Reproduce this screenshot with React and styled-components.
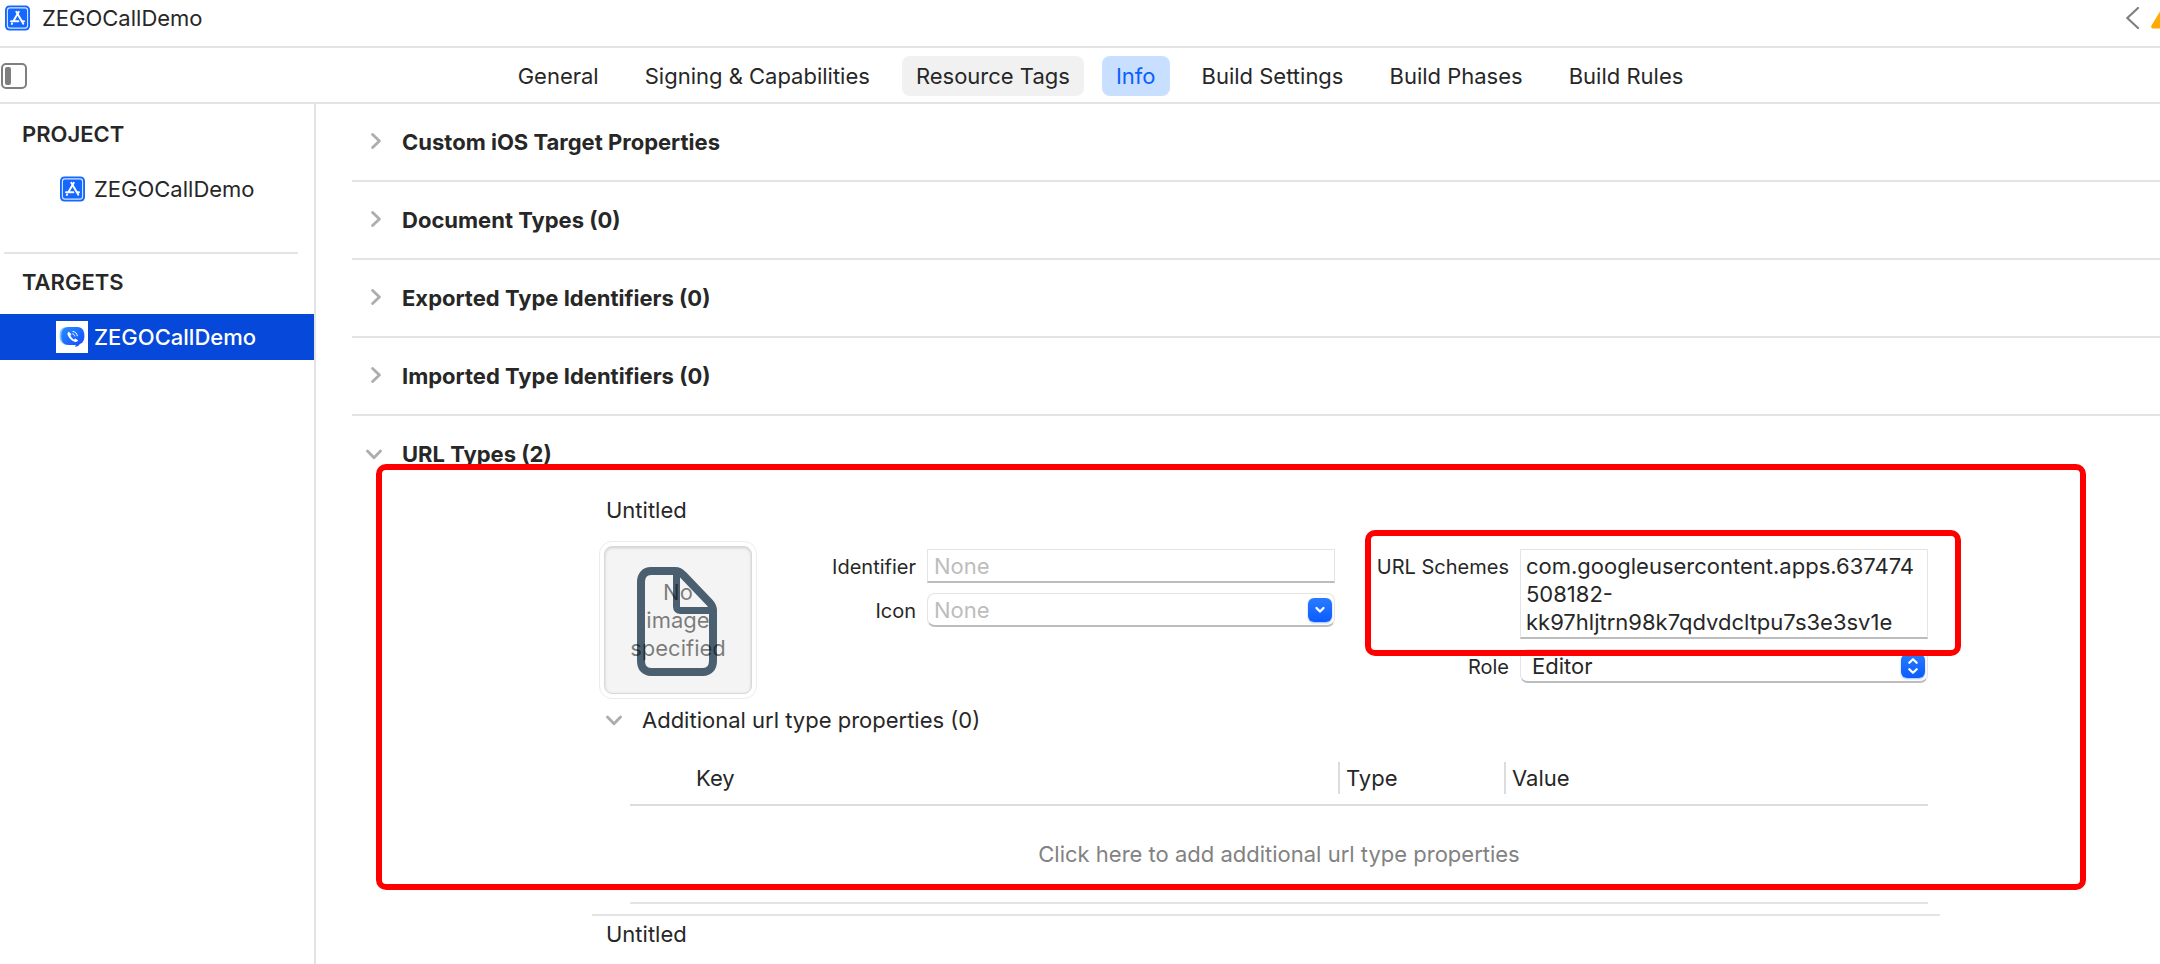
import React from 'react';
import styled, { createGlobalStyle, css } from 'styled-components';

const ink = '#272727';
const rule = '#e4e4e4';
const blue = '#0a60ff';

const GlobalStyle = createGlobalStyle`
  *, *::before, *::after { box-sizing: border-box; }
  body {
    margin: 0;
    background: #fff;
    color: ${ink};
    font: 400 22px/28px Inter, "Liberation Sans", sans-serif;
    overflow-x: hidden;
  }
  h1, h2, h3, p, ul { margin: 0; padding: 0; font: inherit; list-style: none; }
  button, input, select, textarea { font: inherit; color: inherit; margin: 0; }
  svg { display: block; flex: none; }
`;

const Window = styled.div`
  display: flex;
  flex-direction: column;
  height: 100vh;
  overflow: hidden;
`;

const TitleBar = styled.header`
  display: flex;
  align-items: center;
  flex: none;
  height: 48px;
  padding: 0 0 10px 5px;
  border-bottom: 2px solid ${rule};
`;

const Title = styled.h1`
  flex: 1;
  margin-left: 12px;
`;

const BareButton = styled.button`
  padding: 0;
  border: 0;
  background: none;
  cursor: pointer;
`;

const WarningSlot = styled.span`
  width: 9px;
  margin-left: 12px;
  overflow: hidden;
`;

const TabBar = styled.div`
  display: flex;
  align-items: center;
  flex: none;
  height: 56px;
  padding: 2px 0 0 1px;
  border-bottom: 2px solid ${rule};
`;

const Tabs = styled.nav`
  display: flex;
  flex: 1;
  justify-content: center;
  gap: 18px;
  margin-left: 14px;
`;

const Tab = styled.button`
  height: 40px;
  padding: 0 14px;
  border: 0;
  border-radius: 8px;
  white-space: nowrap;
  background: ${(p) => (p.$state === 'active' ? '#c9dfff' : p.$state === 'hover' ? '#f1f1f1' : 'none')};
  color: ${(p) => (p.$state === 'active' ? blue : ink)};
  cursor: pointer;
`;

const Columns = styled.div`
  display: flex;
  flex: 1;
  min-height: 0;
`;

const Sidebar = styled.aside`
  flex: none;
  width: 316px;
  padding-top: 2px;
  border-right: 2px solid ${rule};
`;

const GroupTitle = styled.h2`
  padding: 14px 22px 18px;
  font-weight: 600;
`;

const SidebarItem = styled.button`
  display: flex;
  align-items: center;
  width: 100%;
  height: 46px;
  padding: 0 0 0 56px;
  border: 0;
  background: ${(p) => (p.$selected ? '#0648d9' : 'none')};
  color: ${(p) => (p.$selected ? '#fff' : ink)};
  font-weight: ${(p) => (p.$selected ? 500 : 400)};
  cursor: pointer;
`;

const ItemIcon = styled.span`
  display: grid;
  place-items: center;
  width: 32px;
  height: 32px;
  margin-right: 6px;
  background: ${(p) => (p.$filled ? '#fff' : 'none')};
`;

const SidebarRule = styled.hr`
  height: 2px;
  margin: 40px 16px 0 4px;
  border: 0;
  background: ${rule};
`;

const Main = styled.main`
  flex: 1;
  min-width: 0;
  padding-left: 36px;
`;

const SectionHeader = styled.button`
  display: flex;
  align-items: center;
  width: 100%;
  height: ${(p) => (p.$open ? 76 : 78)}px;
  padding: 0 0 0 14px;
  border: 0;
  border-bottom: ${(p) => (p.$open ? 0 : 2)}px solid ${rule};
  background: none;
  font-weight: 700;
  text-align: left;
  cursor: pointer;
`;

const ChevronSlot = styled.span`
  display: grid;
  place-items: center;
  width: 16px;
  height: 28px;
`;

const HeaderText = styled.span`
  margin-left: 20px;
`;

const UrlTypes = styled.div`
  position: relative;
  padding: 0 220px 0 240px;
`;

const UrlType = styled.li`
  padding: 4px 12px 10px 7px;
  & + & { border-top: 2px solid ${rule}; }
`;

const UrlTypeTitle = styled.h3`
  padding-left: 7px;
`;

const Form = styled.div`
  display: flex;
  margin-top: 17px;
`;

const ImageWell = styled.div`
  flex: none;
  display: grid;
  width: 158px;
  height: 158px;
  padding: 4px;
  border: 1px solid #ececec;
  border-radius: 13px;
`;

const WellFace = styled.div`
  display: grid;
  place-items: center;
  border: 1px solid #d8d8d8;
  border-radius: 8px;
  background: #f4f4f4;
  box-shadow: inset 0 1px 3px rgba(0, 0, 0, 0.16);
  & > * { grid-area: 1 / 1; }
`;

const WellText = styled.p`
  width: 96px;
  color: rgba(0, 0, 0, 0.5);
  text-align: center;
  z-index: 1;
`;

const FieldStack = styled.div`
  display: flex;
  flex: 1 1 ${(p) => p.$basis}px;
  flex-direction: column;
  gap: 10px;
  min-width: 0;
  padding-top: 8px;
`;

const FieldRow = styled.div`
  position: relative;
  display: grid;
  grid-template-columns: ${(p) => p.$label}px minmax(0, 1fr);
`;

const FieldLabel = styled.label`
  padding: 4px 11px 0 0;
  font-size: 20px;
  text-align: right;
`;

const fieldFace = css`
  display: block;
  width: 100%;
  border: 1px solid ${rule};
  border-bottom: 2px solid #bdbdbd;
  background: #fff;
  outline: 0;
  &::placeholder { color: #bdbdbd; opacity: 1; }
`;

const TextInput = styled.input`
  ${fieldFace}
  height: 34px;
  padding: 1px 6px 0;
  border-radius: ${(p) => (p.$round ? 8 : 0)}px;
`;

const TextBlock = styled.textarea`
  ${fieldFace}
  height: 90px;
  padding: 2px 5px 0;
  white-space: pre;
  overflow: hidden;
  resize: none;
`;

const SelectBox = styled.select`
  ${fieldFace}
  height: 34px;
  padding: 0 40px 0 11px;
  border-radius: 8px;
  appearance: none;
`;

const FieldWrap = styled.div`
  position: relative;
`;

const Knob = styled.span`
  position: absolute;
  top: 5px;
  right: 3px;
  display: grid;
  place-items: center;
  width: 24px;
  height: 24px;
  border-radius: 6px;
  background: linear-gradient(#2a7bff, #0a5cff);
  box-shadow: 0 1px 2px rgba(10, 92, 255, 0.4);
  pointer-events: none;
`;

const Disclosure = styled.button`
  display: flex;
  align-items: center;
  margin: 7px 0 0 7px;
  padding: 0;
  border: 0;
  background: none;
  cursor: pointer;
`;

const PropertyTable = styled.table`
  width: calc(100% - 31px);
  margin: 15px 0 0 31px;
  border-collapse: collapse;
  table-layout: fixed;
  border-bottom: 2px solid ${rule};
`;

const HeadCell = styled.th`
  width: ${(p) => p.$width || 'auto'};
  height: 56px;
  padding: 2px 0 0 ${(p) => p.$inset || 0}px;
  border-bottom: 2px solid #dcdcdc;
  font-weight: 400;
  text-align: left;
`;

const Divided = styled.span`
  display: block;
  padding-left: 6px;
  border-left: 2px solid #dcdcdc;
  line-height: 32px;
`;

const EmptyCell = styled.td`
  height: 98px;
  padding: 0;
  color: #828282;
  text-align: center;
`;

const Highlight = styled.div`
  position: absolute;
  inset: ${(p) => p.$inset};
  z-index: 2;
  border: 6px solid #f00;
  border-radius: 10px;
  pointer-events: none;
`;

const Chevron = ({ open }) => (
  <svg width="16" height="18" viewBox="0 0 16 18" fill="none" stroke="#adadad" strokeWidth="2.8" strokeLinecap="round" strokeLinejoin="round">
    <path d={open ? 'M1.5 6 8 12.7 14.5 6' : 'M6.6 1.5 13.4 8 6.6 14.5'} />
  </svg>
);

const ProjectIcon = () => (
  <svg width="25" height="26" viewBox="0 0 25 26" fill="none">
    <rect y="0.5" width="25" height="25" rx="4.5" fill="#1467ff" />
    <rect x="2.4" y="2.9" width="20.2" height="20.2" rx="2.6" stroke="#d7e6ff" strokeWidth="1.1" />
    <g stroke="#fff" strokeWidth="1.9" strokeLinecap="round">
      <path d="M13.8 6.800 8.300 16.300M11.300 6.800l7 12M6 16.300h7.400M16.800 16.300h2.200M6.800 19l.3-.5" />
    </g>
  </svg>
);

const CallIcon = () => (
  <svg width="26" height="22" viewBox="0 0 26 22">
    <defs>
      <linearGradient id="bubble" x1="0" x2="1" y1="0" y2="1">
        <stop offset="0" stopColor="#2590ff" />
        <stop offset="1" stopColor="#1546ff" />
      </linearGradient>
    </defs>
    <path d="M7 1.2h6v17.600H9C3.500 18.800.6 15.500.6 10S2.500 1.200 7 1.200Z" fill="#7fc4f8" />
    <path d="M10 1h8.500c4.800 0 6.900 3.500 6.900 8.800 0 4.300-1.300 7.200-4.600 8.300-.7 1.600-2.400 2.600-5 2.900.7-.7.9-1.300.9-2H10c-5 0-7.700-3-7.700-9S5 1 10 1Z" fill="url(#bubble)" />
    <path d="M9.700 5.700c-1.300.8-1.500 2.200-.8 3.700 1.400 3 3.600 5.100 6.600 6.300 1.600.6 2.900.1 3.600-1.200l-2.600-2-1.500 1c-1.800-.9-2.900-2.200-3.600-3.900l1.100-1.300Z" fill="#fff" />
    <path d="M14 5.500c2.400.2 4 1.800 4.300 4.300M13.700 7.900c1.200.2 1.900.9 2.100 2.100" stroke="#fff" strokeWidth="1" fill="none" strokeLinecap="round" />
  </svg>
);

const NavigatorIcon = () => (
  <svg width="26" height="26" viewBox="0 0 26 26">
    <rect x="1" y="1" width="24" height="24" rx="4" fill="none" stroke="#7f7f7f" strokeWidth="2" />
    <rect x="4" y="4" width="6" height="18" rx="2" fill="#7f7f7f" />
  </svg>
);

const BackIcon = () => (
  <svg width="13" height="22" viewBox="0 0 13 22" fill="none" stroke="#808080" strokeWidth="2.2" strokeLinecap="round">
    <path d="M12 1 1.300 11 12 21" />
  </svg>
);

const WarningIcon = () => (
  <svg width="26" height="22" viewBox="0 0 26 22">
    <path d="M13 0c.8 0 1.500.4 1.900 1.100l9.700 17.500c.8 1.500-.1 3-1.700 3H2.200c-1.600 0-2.500-1.500-1.700-3L11.100 1.100C11.500.4 12.200 0 13 0Z" fill="#ffaa00" />
  </svg>
);

const DocumentIcon = () => (
  <svg width="82" height="112" viewBox="0 -3 82 112" fill="none" stroke="#4a5f70" strokeWidth="8" strokeLinejoin="round">
    <path d="M14 4h24c3.500 0 5.500 1 8 3.800L73 36c2 2.300 3 4.500 3 7.500V94c0 7-4 11-10 11H14C8 105 4 101 4 94V15C4 8 8 4 14 4Z" />
    <path d="M39.500 6v33.500c0 2.500 1.500 4 4 4H75" strokeWidth="7" />
  </svg>
);

const Arrow = () => (
  <svg width="12" height="8" viewBox="0 0 12 8" fill="none" stroke="#fff" strokeWidth="2.4" strokeLinecap="round" strokeLinejoin="round">
    <path d="M2.500 2 6 5.500 9.500 2" />
  </svg>
);

const DoubleArrow = () => (
  <svg width="12" height="18" viewBox="0 0 12 18" fill="none" stroke="#fff" strokeWidth="2.2" strokeLinecap="round" strokeLinejoin="round">
    <path d="M2.300 5.800 6 2.200l3.700 3.600M2.300 12.200 6 15.800l3.700-3.600" />
  </svg>
);

const tabs = [
  ['General'],
  ['Signing & Capabilities'],
  ['Resource Tags', 'hover'],
  ['Info', 'active'],
  ['Build Settings'],
  ['Build Phases'],
  ['Build Rules'],
];

const sections = [
  'Custom iOS Target Properties',
  'Document Types (0)',
  'Exported Type Identifiers (0)',
  'Imported Type Identifiers (0)',
];

const scheme = 'com.googleusercontent.apps.637474\n508182-\nkk97hljtrn98k7qdvdcltpu7s3e3sv1e';

export default function App() {
  return (
    <Window>
      <GlobalStyle />
      <TitleBar>
        <ProjectIcon />
        <Title>ZEGOCallDemo</Title>
        <BareButton aria-label="Previous issue"><BackIcon /></BareButton>
        <WarningSlot><WarningIcon /></WarningSlot>
      </TitleBar>
      <TabBar>
        <BareButton aria-label="Toggle navigator"><NavigatorIcon /></BareButton>
        <Tabs>
          {tabs.map(([name, state]) => (
            <Tab key={name} $state={state}>{name}</Tab>
          ))}
        </Tabs>
      </TabBar>
      <Columns>
        <Sidebar>
          <GroupTitle>PROJECT</GroupTitle>
          <SidebarItem>
            <ItemIcon><ProjectIcon /></ItemIcon>
            ZEGOCallDemo
          </SidebarItem>
          <SidebarRule />
          <GroupTitle>TARGETS</GroupTitle>
          <SidebarItem $selected>
            <ItemIcon $filled><CallIcon /></ItemIcon>
            ZEGOCallDemo
          </SidebarItem>
        </Sidebar>
        <Main>
          {sections.map((name) => (
            <SectionHeader key={name}>
              <ChevronSlot><Chevron /></ChevronSlot>
              <HeaderText>{name}</HeaderText>
            </SectionHeader>
          ))}
          <SectionHeader $open>
            <ChevronSlot><Chevron open /></ChevronSlot>
            <HeaderText>URL Types (2)</HeaderText>
          </SectionHeader>
          <UrlTypes>
            <ul>
              <UrlType>
                <UrlTypeTitle>Untitled</UrlTypeTitle>
                <Form>
                  <ImageWell>
                    <WellFace>
                      <DocumentIcon />
                      <WellText>No image specified</WellText>
                    </WellFace>
                  </ImageWell>
                  <FieldStack $basis={578}>
                    <FieldRow $label={170}>
                      <FieldLabel htmlFor="identifier">Identifier</FieldLabel>
                      <TextInput id="identifier" placeholder="None" />
                    </FieldRow>
                    <FieldRow $label={170}>
                      <FieldLabel htmlFor="icon">Icon</FieldLabel>
                      <FieldWrap>
                        <TextInput id="icon" placeholder="None" $round />
                        <Knob><Arrow /></Knob>
                      </FieldWrap>
                    </FieldRow>
                  </FieldStack>
                  <FieldStack $basis={593}>
                    <FieldRow $label={185}>
                      <FieldLabel htmlFor="schemes">URL Schemes</FieldLabel>
                      <TextBlock id="schemes" defaultValue={scheme} />
                      <Highlight $inset="-19px -33px -17px 30px" />
                    </FieldRow>
                    <FieldRow $label={185}>
                      <FieldLabel htmlFor="role">Role</FieldLabel>
                      <FieldWrap>
                        <SelectBox id="role" defaultValue="Editor">
                          <option>Editor</option>
                          <option>Viewer</option>
                          <option>None</option>
                        </SelectBox>
                        <Knob><DoubleArrow /></Knob>
                      </FieldWrap>
                    </FieldRow>
                  </FieldStack>
                </Form>
                <Disclosure>
                  <ChevronSlot><Chevron open /></ChevronSlot>
                  <HeaderText>Additional url type properties (0)</HeaderText>
                </Disclosure>
                <PropertyTable>
                  <thead>
                    <tr>
                      <HeadCell $inset={66}>Key</HeadCell>
                      <HeadCell $width="166px"><Divided>Type</Divided></HeadCell>
                      <HeadCell $width="424px"><Divided>Value</Divided></HeadCell>
                    </tr>
                  </thead>
                  <tbody>
                    <tr>
                      <EmptyCell colSpan={3}>Click here to add additional url type properties</EmptyCell>
                    </tr>
                  </tbody>
                </PropertyTable>
              </UrlType>
              <UrlType>
                <UrlTypeTitle>Untitled</UrlTypeTitle>
              </UrlType>
            </ul>
            <Highlight $inset="-28px 74px 68px 24px" />
          </UrlTypes>
        </Main>
      </Columns>
    </Window>
  );
}
